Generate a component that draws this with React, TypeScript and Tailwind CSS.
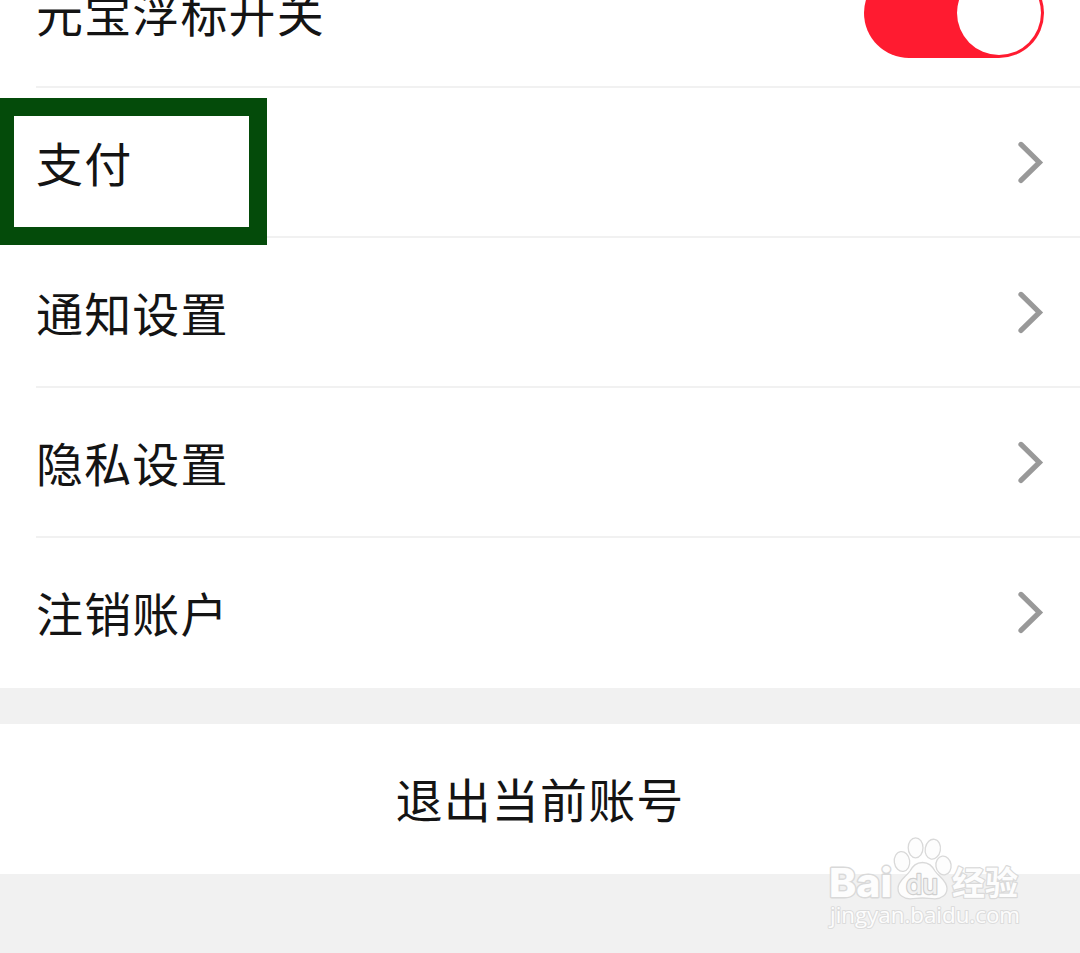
import React, { useState } from 'react';

interface SettingRowProps {
  label: string;
  last?: boolean;
  children?: React.ReactNode;
}

const ChevronIcon: React.FC = () => (
  <svg width="27" height="44" viewBox="0 0 27 44" fill="none">
    <path
      d="M4 4.4 L22.4 22.4 L4 40.4"
      stroke="#999999"
      strokeWidth="5.2"
      strokeLinecap="round"
      strokeLinejoin="miter"
    />
  </svg>
);

const SettingRow: React.FC<SettingRowProps> = ({ label, last = false, children }) => (
  <div
    className={`ml-9 h-[150px] shrink-0 pr-9 flex items-center justify-between border-b-2 ${
      last ? 'border-transparent' : 'border-[#f1f1f1]'
    }`}
  >
    <span className="text-[47px] leading-[70px] tracking-[1.15px] pb-[1px]">{label}</span>
    {children ?? <ChevronIcon />}
  </div>
);

const Toggle: React.FC = () => {
  const [checked, setChecked] = useState(true);

  return (
    <button
      type="button"
      role="switch"
      aria-checked={checked}
      onClick={() => setChecked(!checked)}
      className={`mt-[2px] w-[180px] h-[90px] rounded-full p-[3px] flex items-center cursor-pointer ${
        checked ? 'justify-end bg-[#ff1b30]' : 'justify-start bg-[#e5e5e5]'
      }`}
    >
      <span className="w-[84px] h-[84px] rounded-full bg-white" />
    </button>
  );
};

const Watermark: React.FC = () => (
  <svg className="absolute left-[820px] top-[832px]" width="210" height="104" viewBox="0 0 210 104">
    <g fill="#fdfdfd" stroke="#d9d9d9" strokeWidth="1.3" strokeLinejoin="round">
      {/* Paw */}
      <ellipse cx="82" cy="29.5" rx="7.7" ry="10" transform="rotate(-8 82 29.5)" />
      <ellipse cx="95.6" cy="15.8" rx="7.4" ry="10" />
      <ellipse cx="112.8" cy="17.2" rx="7.6" ry="10" transform="rotate(10 112.8 17.2)" />
      <ellipse cx="123.5" cy="33.5" rx="7.6" ry="9.4" transform="rotate(-8 123.5 33.5)" />
      <path d="M102.5 30.5 C109 30.5 112 34 115 39 C119 45 127 48.5 127 56.5 C127 63 121.500 66.800 115 66.800 C110 66.800 107 66 102.500 66 C98 66 95 66.800 90 66.800 C83.500 66.800 78 63 78 56.500 C78 48.500 86 45 90 39 C93 34 96 30.500 102.500 30.500 Z" />
      <text
        x="9"
        y="65"
        fontSize="40"
        fontWeight="800"
        textLength="63"
        lengthAdjust="spacingAndGlyphs"
        strokeWidth="2.8"
        paintOrder="stroke"
        className="font-['Inter',sans-serif]"
      >
        Bai
      </text>
      <text
        x="86"
        y="61.5"
        fontSize="27"
        fill="#f1f1f1"
        stroke="#cfcfcf"
        strokeWidth="2.4"
        paintOrder="stroke"
        fontWeight="500"
        textLength="32"
        lengthAdjust="spacingAndGlyphs"
        className="font-['Inter',sans-serif]"
      >
        du
      </text>
      <text
        x="132"
        y="63"
        fontSize="33"
        fontWeight="700"
        strokeWidth="2.4"
        paintOrder="stroke"
        className="font-['Noto_Sans_CJK_SC',sans-serif]"
      >
        经验
      </text>
      <text
        x="10"
        y="91"
        fontSize="21"
        fontWeight="500"
        textLength="190"
        lengthAdjust="spacingAndGlyphs"
        strokeWidth="2"
        stroke="#dcdcdc"
        paintOrder="stroke"
        className="font-['Open_Sans',sans-serif]"
      >
        jingyan.baidu.com
      </text>
    </g>
  </svg>
);

export default function App() {
  return (
    <div className="relative w-[1080px] h-[953px] overflow-hidden bg-[#f1f1f1] text-[#141414] font-['Noto_Sans_CJK_SC',sans-serif]">
      <div className="bg-white h-[688px]">
        {/* First row is scrolled halfway past the top edge */}
        <div className="h-[88px] flex flex-col justify-end overflow-hidden">
          <SettingRow label="元宝浮标开关">
            <Toggle />
          </SettingRow>
        </div>
        <SettingRow label="支付" />
        <SettingRow label="通知设置" />
        <SettingRow label="隐私设置" />
        <SettingRow label="注销账户" last />
      </div>

      <button
        type="button"
        className="mt-9 w-full h-[150px] bg-white flex items-center justify-center cursor-pointer"
      >
        <span className="text-[47px] leading-[70px] tracking-[1.15px] pb-[3px]">退出当前账号</span>
      </button>

      {/* Highlight frame around the payment entry */}
      <div className="absolute left-0 top-[98px] w-[267px] h-[147px] border-[18px] border-l-[14px] border-[#044b0a]" />

      <Watermark />
    </div>
  );
}
